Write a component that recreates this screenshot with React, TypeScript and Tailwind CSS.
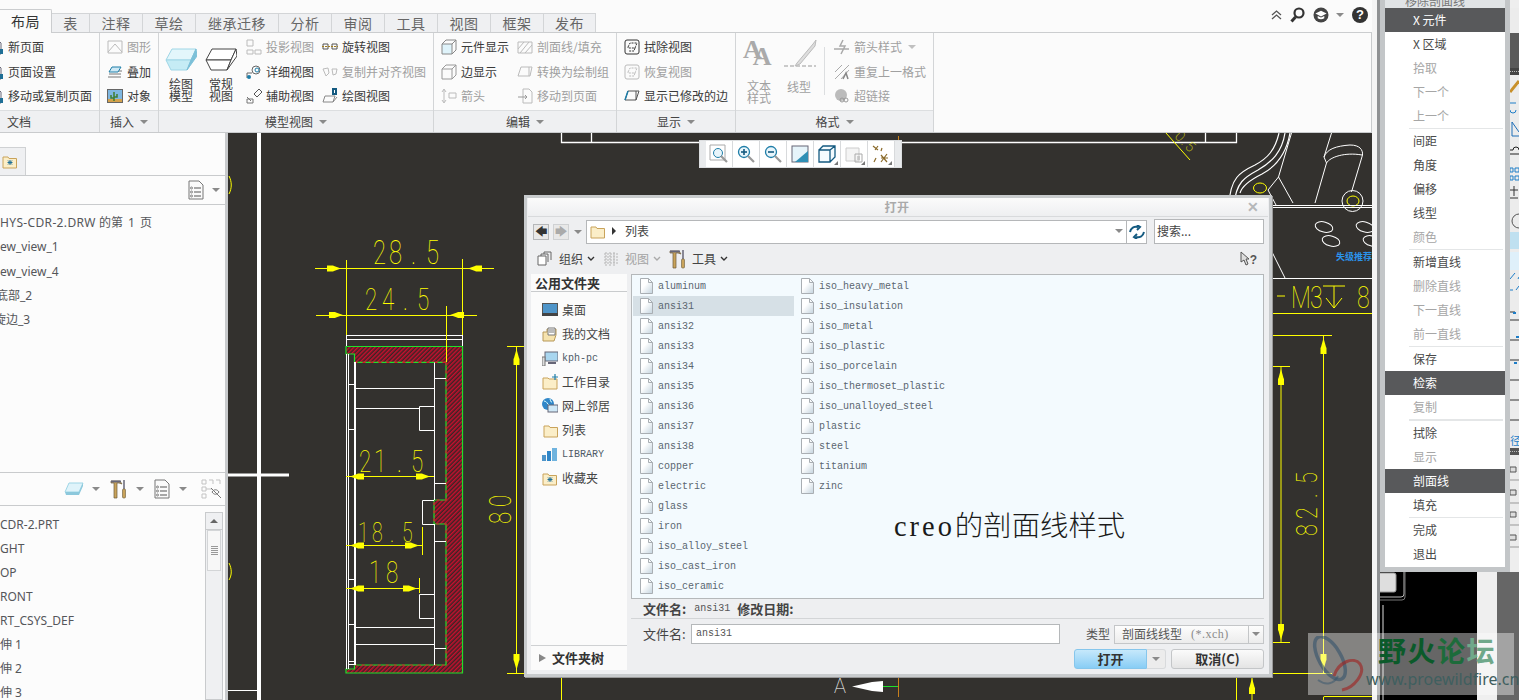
import type { ReactNode } from 'react';

const DOWN = 'inline-block w-0 h-0 border-x-[4px] border-x-transparent border-t-[4px] border-t-[#8a8a8a]';

function S({ w = 16, h = 16, children }: { w?: number; h?: number; children: ReactNode }) {
  return (
    <svg width={w} height={h} viewBox={`0 0 ${w} ${h}`} fill="none" className="shrink-0 block">
      {children}
    </svg>
  );
}

const Page = () => (
  <S>
    <path d="M4 1h6l3 3v11H4z" fill="#fff" stroke="#667" />
    <path d="M6 10h9v5H6z" fill="#1f6f96" />
  </S>
);
const Graph = () => (
  <S>
    <path d="M1 2h14v12H1z" stroke="#bbb" />
    <path d="M1 13l7-8 7 8" stroke="#bbb" />
  </S>
);
const Overlay = () => (
  <S>
    <path d="M1 13h13M2 10h12M3 7h12" stroke="#777" />
    <path d="M5 3h9l-3 5H2z" fill="#cfe9f5" stroke="#1f7ea8" />
  </S>
);
const Picture = () => (
  <S>
    <rect x="0.5" y="1.5" width="15" height="13" fill="#7fb7e0" stroke="#666" />
    <path d="M1 11h14v3H1z" fill="#d4a24c" />
    <path d="M7 4v9M4 7v3h3M10 6v3H7" stroke="#3f7d2e" strokeWidth="1.5" />
  </S>
);
const BigBlock = ({ blue }: { blue?: boolean }) => (
  <S w={32} h={26}>
    <path d="M7 2h24l-5 11H1z" fill={blue ? '#e3f6fb' : '#fff'} stroke={blue ? '#9fd6e6' : '#444'} />
    <path d="M1 13h25l-4 10H6z" fill={blue ? '#c5ecf5' : '#fff'} stroke={blue ? '#9fd6e6' : '#444'} />
    <path d="M31 2l1 7-10 14 4-10z" fill={blue ? '#7cc0d8' : '#fff'} stroke={blue ? '#7cc0d8' : '#444'} />
  </S>
);
const Projection = () => (
  <S>
    <path d="M1 1h6v6H1zM1 11h6v4H1zM9 11h6v4H9z" stroke="#bbb" />
  </S>
);
const Detail = () => (
  <S>
    <circle cx="10" cy="6" r="4" stroke="#666" />
    <path d="M1 9h5M1 9v5" stroke="#666" />
    <circle cx="3" cy="13" r="2" fill="#1f7ea8" />
    <circle cx="11" cy="6" r="2" stroke="#1f7ea8" />
  </S>
);
const Auxiliary = () => (
  <S>
    <path d="M8 6l5-5 3 3-5 5z" stroke="#555" />
    <path d="M1 9l4 4M1 11h6v4H1z" stroke="#777" />
  </S>
);
const Rotate = () => (
  <S>
    <path d="M1 5h5v5H1zM10 5h5v5h-5z" stroke="#555" />
    <path d="M0 7.5h16" stroke="#a07d20" strokeDasharray="2 1" />
  </S>
);
const CopyAlign = () => (
  <S>
    <path d="M1 5l5-1 1 5-3 3zM10 5h5l-1 5-3 1z" stroke="#bbb" />
  </S>
);
const DrawingView = () => (
  <S>
    <path d="M3 8h10l-2 6H1zM11 14l4-5" stroke="#888" />
    <rect x="10" y="0" width="5" height="7" fill="#145a80" />
    <path d="M12.5 2v3" stroke="#fff" />
  </S>
);
const Cube = ({ c = '#999', fill }: { c?: string; fill?: string }) => (
  <S>
    <path d="M1 5h10v10H1z" fill={fill} stroke={c} />
    <path d="M1 5l4-4h10v10l-4 4M11 5l4-4" stroke={c} />
  </S>
);
const Arrows = () => (
  <S>
    <path d="M3 2v12M1 4l2-3 2 3M1 12l2 3 2-3" stroke="#bbb" />
    <path d="M8 5h7v5H8z" stroke="#bbb" />
  </S>
);
const Hatch = () => (
  <S>
    <path d="M1 3h14v11H1zM1 10l6-7M3 14l9-11M8 14l7-8" stroke="#bbb" />
  </S>
);
const Convert = () => (
  <S>
    <path d="M4 3h11l-2 9H1z" stroke="#bbb" />
    <path d="M12 3v9" stroke="#bbb" />
  </S>
);
const MoveTo = () => (
  <S>
    <path d="M6 1h6l3 3v11H6z" stroke="#bbb" />
    <path d="M1 9h9M8 7l2 2-2 2" stroke="#999" />
  </S>
);
const Erase = ({ c = '#333' }: { c?: string }) => (
  <S>
    <rect x="1" y="1" width="14" height="14" rx="2" stroke={c} />
    <path d="M4 8l2-4h7l-2 5H4zM11 9l-1 3H5" stroke={c} strokeDasharray="2 1" />
  </S>
);
const Modified = () => (
  <S>
    <path d="M4 3h11l-3 9H1z" stroke="#555" />
    <path d="M1 12l3-9" stroke="#1f7ea8" strokeWidth="1.5" />
    <path d="M12 3v9" stroke="#555" />
  </S>
);
const ArrowStyle = () => (
  <S>
    <path d="M0 10h15M9 1L6 7h5l-4 8" stroke="#aaa" strokeWidth="1.5" />
  </S>
);
const Repeat = () => (
  <S>
    <path d="M1 8l7-7M1 15L15 1M7 15l8-9" stroke="#aaa" />
    <path d="M9 15l3-6 2 6" stroke="#888" strokeWidth="1.5" />
  </S>
);
const Link = () => (
  <S>
    <circle cx="7" cy="7" r="6" fill="#bbb" />
    <circle cx="8" cy="12" r="2" stroke="#999" />
    <circle cx="12" cy="12" r="2" stroke="#999" />
  </S>
);

function Folder({ star, w = 16 }: { star?: boolean; w?: number }) {
  return (
    <S w={w} h={15}>
      <path d="M1 3h5l1 1.5h7.5V14H1z" fill="#fbeec8" stroke="#c9a35a" />
      {star && <path d="M8 6v5M5.5 8.5h5M6 6.5l4 4M10 6.5l-4 4" stroke="#1f6f96" />}
    </S>
  );
}

const Tools = () => (
  <S w={17} h={20}>
    <path d="M1 2h9l2 3-3-1H7v15H4V4H1z" fill="#c9a35a" stroke="#6a5a3a" strokeWidth=".7" />
    <path d="M1 1.5h10v2H1z" fill="#667" />
    <path d="M14 1v9" stroke="#667" strokeWidth="1.5" />
    <rect x="12.5" y="10" width="3" height="9" rx="1" fill="#c9a35a" stroke="#6a5a3a" strokeWidth=".6" />
  </S>
);

const Sheet = () => (
  <S w={16} h={20}>
    <path d="M1 1h10l4 4v14H1z" fill="#fafafa" stroke="#777" />
    <path d="M6 8h7M6 12h7M6 16h7" stroke="#555" />
    <circle cx="3.5" cy="8" r="1" stroke="#555" strokeWidth=".7" />
    <circle cx="3.5" cy="12" r="1" stroke="#555" strokeWidth=".7" />
    <circle cx="3.5" cy="16" r="1" stroke="#555" strokeWidth=".7" />
  </S>
);

function Item({ icon, label, off }: { icon: ReactNode; label: string; off?: boolean }) {
  return (
    <div className={`flex items-center h-[24.5px] whitespace-nowrap ${off ? 'text-[#a0a0a0]' : 'text-[#3a3a3a]'}`}>
      <span className="w-4 h-4 mr-1 shrink-0">{icon}</span>
      {label}
    </div>
  );
}

function Big({ icon, lines, off }: { icon: ReactNode; lines: string[]; off?: boolean }) {
  return (
    <div className={`w-[40px] flex flex-col items-center ${off ? 'text-[#a0a0a0]' : 'text-[#3a3a3a]'}`}>
      <div className="h-[40px] pt-[12px]">{icon}</div>
      <div className="mt-[3px] leading-[12px] text-center">
        {lines.map((l) => (
          <div key={l}>{l}</div>
        ))}
      </div>
    </div>
  );
}

function Group({ width, label, more, start, children }: { width: string; label: string; more?: boolean; start?: boolean; children: ReactNode }) {
  return (
    <div className={`${width} shrink-0 flex flex-col border-r border-[#d3d5d7]`}>
      <div className="h-[77px] flex overflow-hidden pt-[2px]">{children}</div>
      <div className={`h-[22px] bg-[#eff0f2] flex items-center gap-[6px] text-[#444] border-t border-[#dcdee0] ${start ? 'pl-[7px]' : 'justify-center'}`}>
        {label}
        {more && <span className={DOWN} />}
      </div>
    </div>
  );
}

const TABS = [
  ['表', 'w-[38px]'],
  ['注释', 'w-[53px]'],
  ['草绘', 'w-[53px]'],
  ['继承迁移', 'w-[83px]'],
  ['分析', 'w-[53px]'],
  ['审阅', 'w-[53px]'],
  ['工具', 'w-[53px]'],
  ['视图', 'w-[53px]'],
  ['框架', 'w-[53px]'],
  ['发布', 'w-[52px]'],
];

function Ribbon() {
  return (
    <div className="h-[133px] bg-[#fbfbfb] text-[12px] border-b border-[#c9cbcd] shrink-0">
      <div className="h-[33px] flex items-end relative border-b border-[#cbcdcf]">
        <div className="w-[52px] h-[24px] -mb-px bg-[#fbfbfb] border-t border-r border-[#cbcdcf] rounded-tr-[2px] flex items-center justify-center text-[14px] tracking-[0.5px] text-[#333]">
          布局
        </div>
        {TABS.map(([t, w]) => (
          <div key={t} className={`${w} h-[19px] bg-[#eff0f2] border-t border-r border-[#d3d5d7] flex items-center justify-center text-[14px] tracking-[0.5px] text-[#666]`}>
            {t}
          </div>
        ))}
        <div className="absolute right-[4px] top-[7px] flex items-center">
          <svg width="11" height="10" viewBox="0 0 11 10" fill="none">
            <path d="M1 5l4.5-4 4.5 4M1 9l4.5-4 4.5 4" stroke="#555" strokeWidth="1.3" />
          </svg>
          <svg width="15" height="16" viewBox="0 0 15 16" fill="none" className="ml-[8px]">
            <circle cx="9" cy="6" r="4.5" stroke="#333" strokeWidth="2.2" />
            <path d="M5.5 10l-4 4.5" stroke="#333" strokeWidth="3" />
          </svg>
          <svg width="16" height="16" viewBox="0 0 17 17" className="ml-[8px]">
            <circle cx="8.5" cy="8.5" r="8" fill="#444" />
            <path d="M2.5 7l6-3 6 3-6 3z" fill="#fff" />
            <path d="M5 9.5v2.5c2 1.3 5 1.3 7 0V9.5l-3.5 1.7z" fill="#fff" />
          </svg>
          <span className={`${DOWN} ml-[7px] mr-[8px]`} />
          <div className="w-[16px] h-[16px] rounded-full bg-[#333] text-white font-bold text-[13px] leading-[16px] text-center font-['Liberation_Sans']">?</div>
        </div>
      </div>
      <div className="flex h-[99px] w-[1372px] border-r border-[#c9cbcd]">
        <Group width="w-[100px]" label="文档" start>
          <div className="-ml-[12px]">
            <Item icon={<Page />} label="新页面" />
            <Item icon={<Page />} label="页面设置" />
            <Item icon={<Page />} label="移动或复制页面" />
          </div>
        </Group>
        <Group width="w-[59px]" label="插入" more>
          <div className="pl-[7px]">
            <Item icon={<Graph />} label="图形" off />
            <Item icon={<Overlay />} label="叠加" />
            <Item icon={<Picture />} label="对象" />
          </div>
        </Group>
        <Group width="w-[275px]" label="模型视图" more>
          <div className="flex pl-[2px]">
            <Big icon={<BigBlock blue />} lines={['绘图', '模型']} />
            <Big icon={<BigBlock />} lines={['常规', '视图']} />
            <div className="ml-[5px] w-[76px]">
              <Item icon={<Projection />} label="投影视图" off />
              <Item icon={<Detail />} label="详细视图" />
              <Item icon={<Auxiliary />} label="辅助视图" />
            </div>
            <div>
              <Item icon={<Rotate />} label="旋转视图" />
              <Item icon={<CopyAlign />} label="复制并对齐视图" off />
              <Item icon={<DrawingView />} label="绘图视图" />
            </div>
          </div>
        </Group>
        <Group width="w-[183px]" label="编辑" more>
          <div className="flex pl-[7px]">
            <div className="w-[76px]">
              <Item icon={<Cube c="#888" fill="#dff3fa" />} label="元件显示" />
              <Item icon={<Cube />} label="边显示" />
              <Item icon={<Arrows />} label="箭头" off />
            </div>
            <div>
              <Item icon={<Hatch />} label="剖面线/填充" off />
              <Item icon={<Convert />} label="转换为绘制组" off />
              <Item icon={<MoveTo />} label="移动到页面" off />
            </div>
          </div>
        </Group>
        <Group width="w-[119px]" label="显示" more>
          <div className="pl-[7px]">
            <Item icon={<Erase />} label="拭除视图" />
            <Item icon={<Erase c="#bbb" />} label="恢复视图" off />
            <Item icon={<Modified />} label="显示已修改的边" />
          </div>
        </Group>
        <Group width="w-[198px]" label="格式" more>
          <div className="flex pl-[7px]">
            <div className="w-[36px] text-[#a0a0a0]">
              <div className="relative h-[34px] mt-[3px] font-['Liberation_Serif'] font-bold text-[26px] leading-[26px] text-[#aaa] flex">
                <span className="-mt-[1px]">A</span>
                <span className="-ml-[9px] mt-[6px]">A</span>
              </div>
              <div className="mt-[8px] ml-[4px] leading-[12px]">
                <div>文本</div>
                <div>样式</div>
              </div>
            </div>
            <div className="w-[44px] pl-[4px] text-[#a0a0a0]">
              <svg width="34" height="34" viewBox="0 0 34 34" fill="none" className="block mt-[3px]">
                <path d="M14 25L30 6l3-4-1 6-15 18-5 2z" fill="#ddd" stroke="#bbb" />
                <path d="M1 28h32" stroke="#bbb" strokeWidth="1.5" strokeDasharray="4 2" />
              </svg>
              <div className="mt-[6px] ml-[4px]">线型</div>
            </div>
            <div className="w-px h-[48px] bg-[#dcdee0] mt-[12px] ml-[1px] mr-[9px]" />
            <div>
              <div className="flex items-center">
                <Item icon={<ArrowStyle />} label="箭头样式" off />
                <span className={`${DOWN} ml-[6px] border-t-[#c0c0c0]`} />
              </div>
              <Item icon={<Repeat />} label="重复上一格式" off />
              <Item icon={<Link />} label="超链接" off />
            </div>
          </div>
        </Group>
      </div>
    </div>
  );
}

function LeftPanel() {
  return (
    <div className="w-[228px] shrink-0 flex flex-col bg-[#fcfcfc] border-r-[3px] border-[#c8cacc] text-[12px] text-[#55565a] font-['Noto_Sans','Noto_Sans_CJK_SC',sans-serif] overflow-hidden">
      <div className="h-[340px] border-b border-[#c9cbcd] shrink-0">
        <div className="pt-[14px] border-b border-[#c9cbcd]">
          <div className="w-[26px] h-[28px] bg-[#eff0f2] border-t border-r border-[#cfd1d3] flex items-center justify-end pr-[6px]">
            <Folder star w={17} />
          </div>
        </div>
        <div className="h-[29px] flex items-center justify-end gap-[8px] pr-[5px] border-b border-[#c9cbcd]">
          <Sheet />
          <span className={DOWN} />
        </div>
        <div className="pt-[6px] whitespace-nowrap">
          <div className="h-[24.25px] leading-[24px]">
            <span className="tracking-[0.35px]">HYS-CDR-2.DRW</span> <span className="[word-spacing:2px]">的第 1 页</span>
          </div>
          {['ew_view_1', 'ew_view_4'].map((t) => (
            <div key={t} className="h-[24.25px] leading-[24px]">{t}</div>
          ))}
          <div className="h-[24.25px] leading-[24px] -ml-[4px]">底部_2</div>
          <div className="h-[24.25px] leading-[24px] -ml-[6px]">旋边_3</div>
        </div>
      </div>
      <div className="h-[33px] shrink-0 flex items-center justify-end pr-[4px] border-b border-[#c9cbcd]">
        <svg width="20" height="16" viewBox="0 0 20 16" fill="none">
          <path d="M5 2h14l-4 9H1z" fill="#dff3fa" stroke="#9fd6e6" />
          <path d="M1 11h14v3H2zM15 11l4-9v3l-4 9z" fill="#8cc8dc" />
        </svg>
        <span className={`${DOWN} ml-[8px] mr-[10px]`} />
        <Tools />
        <span className={`${DOWN} ml-[9px] mr-[10px]`} />
        <Sheet />
        <span className={`${DOWN} ml-[9px] mr-[14px]`} />
        <svg width="20" height="20" viewBox="0 0 20 20" fill="none">
          <path d="M1 1h4v4H1zM1 8h4v4H1zM1 15h4v4H1zM8 1h4v4M5 10h6M15 1h4v4" stroke="#c3c3c3" />
          <path d="M11 13c2-3 5-3 7 0-2 3-5 3-7 0zM10 9l10 10" stroke="#777" />
        </svg>
      </div>
      <div className="flex-1 flex min-h-0">
        <div className="flex-1 pt-[6px] whitespace-nowrap overflow-hidden">
          {['CDR-2.PRT', 'GHT', 'OP', 'RONT', 'RT_CSYS_DEF', '伸 1', '伸 2', '伸 3'].map((t) => (
            <div key={t} className="h-[24px] leading-[26px]">{t}</div>
          ))}
        </div>
        <div className="w-[18px] mt-[6px] mr-[2px] bg-[#eff0f2] border border-[#c9cbcd] flex flex-col items-center">
          <div className="h-[17px] w-full flex items-center justify-center border-b border-[#c9cbcd]">
            <span className="w-0 h-0 border-x-[4px] border-x-transparent border-b-[4px] border-b-[#666]" />
          </div>
          <div className="w-[14px] h-[41px] bg-[#f7f7f7] border border-[#d3d5d7] flex flex-col items-center justify-center gap-[1px]">
            <span className="w-[7px] h-px bg-[#999]" />
            <span className="w-[7px] h-px bg-[#999]" />
            <span className="w-[7px] h-px bg-[#999]" />
            <span className="w-[7px] h-px bg-[#999]" />
            <span className="w-[7px] h-px bg-[#999]" />
          </div>
        </div>
      </div>
    </div>
  );
}

const Y = '#ffff00';
const W = '#ffffff';

function ArrowH({ x, y, d }: { x: number; y: number; d: 1 | -1 }) {
  return (
    <polygon
      points={`${x},${y} ${x - d * 7},${y - 2.5} ${x - d * 8},${y - 3} ${x - d * 14},${y - 3} ${x - d * 14},${y + 3} ${x - d * 8},${y + 3} ${x - d * 7},${y + 2.5}`}
      fill={Y}
    />
  );
}
function ArrowV({ x, y, d }: { x: number; y: number; d: 1 | -1 }) {
  return (
    <polygon
      points={`${x},${y} ${x - 2.5},${y - d * 9} ${x - 3},${y - d * 10} ${x - 3},${y - d * 16} ${x + 3},${y - d * 16} ${x + 3},${y - d * 10} ${x + 2.5},${y - d * 9}`}
      fill={Y}
    />
  );
}
// digits of the drawing: narrow stroke figures, placed one by one
function Dim({ x, y, xs, size, t, rot }: { x: number; y: number; xs: number[]; size: number; t: string; rot?: boolean }) {
  const k = 0.72;
  return (
    <text
      x={xs.map((v) => (v / k).toFixed(1)).join(' ')}
      y={0}
      fontSize={size}
      fontFamily="Roboto"
      fontWeight={100}
      fill={Y}
      transform={`translate(${x} ${y}) ${rot ? 'rotate(-90)' : ''} scale(${k} 1)`}
    >
      {t}
    </text>
  );
}

function Drawing() {
  const outer = 'M346,346.5 H462.5 V673 H346 V669 H354.5 V665 H446 V524 H434 V500 H446 V362.3 H354.5 V354 H346 Z';
  return (
    <svg width="1144" height="567" viewBox="228 133 1144 567" fill="none" className="block">
      <defs>
        <pattern id="hatch" width="3" height="3" patternUnits="userSpaceOnUse" patternTransform="rotate(45)">
          <rect width="3" height="3" fill="#3a2426" />
          <rect width="1.5" height="3" fill="#c8102e" />
        </pattern>
      </defs>
      {/* frame lines */}
      <path d="M259,133 V700" stroke={W} strokeWidth="4" />
      <path d="M228,475 H289" stroke={W} strokeWidth="3" />
      <path d="M228,690.5 H257" stroke={W} />
      <path d="M229,176 C232,182 232,188 229,194 M229,563 C232,569 232,575 229,580" stroke={Y} />
      <path d="M561.5,133 V142.5 H1236.5 V133 M591.5,133 V142 M1205.5,133 V142" stroke={W} strokeWidth="1.3" />
      <path d="M898.5,136 V142" stroke="#c8801c" />

      {/* section view */}
      <path d={outer} fill="url(#hatch)" />
      <path d={outer} stroke="#1fe02a" strokeWidth="1.2" />
      <path d="M446,362.3 V500 H434 V524 H446 V665 H354.5 M354.5,362.3 H446" stroke="#e0102a" strokeWidth="1.2" strokeDasharray="3 5" />
      <path d="M346.5,335.5 H463 M346.5,339.5 H463 M346.5,335 V346 M462.5,335 V346" stroke={W} />
      <path d="M346.5,354 V669 M348.5,354 V669" stroke={W} />
      <path d="M355,362 V665" stroke={W} strokeWidth="2" />
      <path d="M348,384.5 H355 M348,429.5 H355 M348,579.5 H355 M348,624.5 H355 M348,661.5 H355 M348,664.5 H355" stroke={W} />
      <path d="M434.5,362.5 V500 M434.5,524 V665" stroke={W} />
      <path d="M355,388.5 H434 M355,408.5 H419 M419.5,406.5 H434 M419.5,406.5 V430.5 H434 M434,378.5 H446 M434,483.5 H446 M422.5,500.5 H434 M422.5,500.5 V524.5 H434 M434,541.5 H446 M419.5,594.5 H434 M419.5,594.5 V618.5 H434 M355,627.5 H434 M355,644.5 H434 M434,648.5 H446" stroke={W} />

      {/* dimensions, section view */}
      <Dim x={373} y={264} xs={[0, 16, 38, 53]} size={33} t="28.5" />
      <path d="M315,268.5 H494 M346.5,260 V335 M462.5,259 V335" stroke={Y} />
      <ArrowH x={341} y={268.5} d={1} />
      <ArrowH x={468} y={268.5} d={-1} />
      <Dim x={365} y={310} xs={[0, 17, 38, 52]} size={31} t="24.5" />
      <path d="M316,315.5 H477 M446.5,306 V362" stroke={Y} />
      <ArrowH x={343} y={315} d={1} />
      <ArrowH x={450} y={315} d={-1} />
      <Dim x={359} y={472} xs={[0, 15, 38, 52]} size={31} t="21.5" />
      <path d="M346,476.5 H434" stroke={Y} />
      <ArrowH x={350} y={476.5} d={-1} />
      <ArrowH x={430} y={476.5} d={1} />
      <Dim x={358} y={542} xs={[0, 14, 32, 44]} size={27} t="18.5" />
      <path d="M346,545.5 H422 M422.5,527 V555" stroke={Y} />
      <ArrowH x={350} y={545.5} d={-1} />
      <ArrowH x={419} y={545.5} d={1} />
      <Dim x={369} y={583} xs={[0, 17]} size={31} t="18" />
      <path d="M346,588.5 H419 M419.5,578 V593" stroke={Y} />
      <ArrowH x={350} y={588.5} d={-1} />
      <ArrowH x={417} y={588.5} d={1} />
      <Dim x={511} y={524} xs={[0, 17]} size={31} t="80" rot />
      <path d="M516.5,347 V673 M507,346.5 H524 M507,673.5 H524" stroke={Y} />
      <ArrowV x={516.5} y={349} d={-1} />
      <ArrowV x={516.5} y={670} d={1} />

      {/* right side of the sheet */}
      <path d="M1279,133 C1275,150 1268,158 1255,165 C1240,172 1230,178 1229,205 M1285,133 C1282,152 1272,162 1258,170 C1245,177 1236,182 1234,205 M1290,133 C1287,150 1279,165 1262,174 C1250,180 1242,186 1240,193" stroke={W} strokeWidth="1.2" />
      <path d="M1291.5,133 L1278.5,177 L1293,203 M1278.5,177 L1268,190 L1276,205 M1331.5,133 L1324,157 C1327,149 1336,146 1350,145 C1360,145 1363,150 1362.5,155 L1351.5,192 M1326.5,163 L1315,203 M1324,157 L1326.5,163 C1330,157 1345,152 1362,155" stroke={W} />
      <circle cx="1352.5" cy="201" r="10.5" stroke={W} />
      <ellipse cx="1353" cy="201" rx="6" ry="5" stroke={Y} />
      <ellipse cx="1260" cy="188" rx="6.5" ry="5" stroke={Y} />
      <path d="M1272,205.5 H1372 M1272,207.5 H1372 M1272,278.5 H1372 M1272,252 L1285,278" stroke={W} />
      <ellipse cx="1324" cy="227" rx="9" ry="5" transform="rotate(15 1324 227)" stroke={W} />
      <ellipse cx="1331" cy="241" rx="9" ry="5" transform="rotate(15 1331 241)" stroke={W} />
      <ellipse cx="1365" cy="227" rx="9" ry="5" transform="rotate(15 1365 227)" stroke={W} />
      <ellipse cx="1372" cy="241" rx="9" ry="5" transform="rotate(15 1372 241)" stroke={W} />
      <text x="1336" y="260" fontSize="9" fontWeight="700" fontFamily="Noto Sans CJK SC" fill="#2b93ea">失级推荐</text>
      <path d="M1166,133 L1190,160" stroke={Y} />
      <text x="1174" y="137" fontSize="14" fontFamily="Roboto" fontWeight={100} fill={Y} letterSpacing="2" transform="rotate(45 1174 137)">0.5</text>

      <path d="M1277,296 H1285" stroke={Y} />
      <Dim x={1291} y={308} xs={[0, 19]} size={32} t="M3" />
      <path d="M1323,286 H1345 M1334,286 V308 M1326,298 L1334,308 L1342,298" stroke={Y} />
      <Dim x={1357} y={308} xs={[0]} size={32} t="8" />
      <path d="M1272,313.5 H1372" stroke={Y} />
      <path d="M1272,335.5 H1332 M1323.5,336 V673 M1272,673.5 H1332 M1272,366.5 H1290 M1281,367 V642 M1272,642.5 H1290" stroke={Y} />
      <ArrowV x={1323.5} y={338} d={-1} />
      <ArrowV x={1323.5} y={670} d={1} />
      <ArrowV x={1281} y={369} d={-1} />
      <ArrowV x={1281} y={640} d={1} />
      <Dim x={1317} y={536} xs={[0, 17, 38, 52]} size={30} t="82.5" rot />

      {/* below the dialog */}
      <path d="M561.5,677 V700 M1236.5,677 V700 M1252,677 V700" stroke={Y} />
      <ArrowV x={1252} y={678} d={-1} />
      <path d="M1323.5,700 V697 Q1323.5,696.5 1325,696.5 H1372" stroke={Y} />
      <text x="834" y="693" fontSize="20" fontFamily="Roboto" fontWeight={100} fill={W}>A</text>
      <polygon points="852,686.5 872,682 883,681 883,692 872,691" fill={W} />
      <path d="M883,686.5 H898" stroke="#1fe02a" />
      <path d="M898.5,677 V697" stroke="#c8801c" />
    </svg>
  );
}

function FloatBar() {
  const lens = (sign?: '+' | '-') => (
    <svg width="20" height="20" viewBox="0 0 20 20" fill="none">
      <circle cx="8" cy="8" r="5.5" fill="#e8f5fb" stroke="#1f7ea8" strokeWidth="1.3" />
      {sign && <path d="M5 8h6" stroke="#145a80" strokeWidth="1.6" />}
      {sign === '+' && <path d="M8 5v6" stroke="#145a80" strokeWidth="1.6" />}
      <path d="M12 12l6 6" stroke="#999" strokeWidth="2.2" />
    </svg>
  );
  return (
    <div className="absolute left-[471px] top-[7px] h-[28px] w-[203px] bg-[#e9ebed] px-[6px] flex border border-[#dcdee0]">
      {[
        <div key="0" className="relative">
          <svg width="20" height="20" viewBox="0 0 20 20" fill="none">
            <path d="M1 1h15v15H1z" stroke="#aaa" />
            <circle cx="9" cy="9" r="4.5" fill="#e8f5fb" stroke="#1f7ea8" />
            <path d="M12 12l6 6" stroke="#999" strokeWidth="2.2" />
          </svg>
        </div>,
        <div key="1">{lens('+')}</div>,
        <div key="2">{lens('-')}</div>,
        <svg key="3" width="18" height="18" viewBox="0 0 18 18" fill="none">
          <rect x="1" y="1" width="16" height="16" fill="#e6f4fa" stroke="#667" />
          <path d="M17 6L4 17h13z" fill="#2f8fb5" />
        </svg>,
        <svg key="4" width="18" height="18" viewBox="0 0 18 18" fill="none">
          <path d="M1 5h11v12H1zM1 5l4-4h12v11l-5 5M12 5l5-4" fill="#f4fbfe" stroke="#145a80" strokeWidth="1.3" />
        </svg>,
        <svg key="5" width="18" height="18" viewBox="0 0 18 18" fill="none">
          <path d="M1 3h13v13H1z" fill="#f4f4f4" stroke="#ccc" />
          <path d="M10 9h7v8h-7zM12 12h3M12 14h3" stroke="#aaa" />
        </svg>,
        <svg key="6" width="18" height="18" viewBox="0 0 18 18" fill="none">
          <path d="M1 1l5 4M3 5l3-4" stroke="#8a6a2a" strokeWidth="1.2" />
          <path d="M10 3l-1 3M2 17l2-4M9 10l6 7M15 9l-6 8M9 13h7" stroke="#8a6a2a" strokeWidth="1.2" />
        </svg>,
      ].map((ic, i) => (
        <div key={i} className="relative w-[27.5px] h-full bg-white border-r border-[#d8dadc] flex items-center justify-center">
          {ic}
          {i > 3 && <span className="absolute right-[2px] bottom-[2px] w-0 h-0 border-l-[4px] border-l-transparent border-b-[4px] border-b-[#777]" />}
        </div>
      ))}
    </div>
  );
}

const FILES_A = ['aluminum', 'ansi31', 'ansi32', 'ansi33', 'ansi34', 'ansi35', 'ansi36', 'ansi37', 'ansi38', 'copper', 'electric', 'glass', 'iron', 'iso_alloy_steel', 'iso_cast_iron', 'iso_ceramic'];
const FILES_B = ['iso_heavy_metal', 'iso_insulation', 'iso_metal', 'iso_plastic', 'iso_porcelain', 'iso_thermoset_plastic', 'iso_unalloyed_steel', 'plastic', 'steel', 'titanium', 'zinc'];

function FileRow({ name, active }: { name: string; active?: boolean }) {
  return (
    <div className={`h-[20px] pl-[7px] flex items-center gap-[5px] ${active ? 'bg-[#d6e0e6]' : ''}`}>
      <svg width="13" height="16" viewBox="0 0 13 16" fill="none" className="shrink-0">
        <path d="M.5.5h8l4 4v11H.5z" fill="url(#filegrad)" stroke="#a9aeb3" />
        <path d="M8.5.5v4h4" stroke="#a9aeb3" />
      </svg>
      <span>{name}</span>
    </div>
  );
}

function SideItem({ icon, label, mono }: { icon: ReactNode; label: string; mono?: boolean }) {
  return (
    <div className="h-[24px] flex items-center pl-[11px]">
      <span className="w-[16px] h-[16px] mr-[4px] flex items-center justify-center">{icon}</span>
      <span className={mono ? "font-['Liberation_Mono'] text-[10px] text-[#4d5a66]" : ''}>{label}</span>
    </div>
  );
}

function Dialog() {
  return (
    <div className="absolute left-[296px] top-[62px] w-[748px] h-[482px] border-[3px] border-[#c8cbcd] bg-[#eeeff1] text-[12px] text-[#444] font-['Noto_Sans_CJK_SC','Noto_Sans',sans-serif] shadow-[1px_1px_0_#999]">
      <svg width="0" height="0" className="absolute">
        <defs>
          <linearGradient id="filegrad" x1="0" y1="0" x2="1" y2="1">
            <stop offset="0.4" stopColor="#ffffff" />
            <stop offset="1" stopColor="#c3d3de" />
          </linearGradient>
        </defs>
      </svg>
      <div className="h-[19px] relative bg-gradient-to-b from-[#fbfbfb] to-[#eeeff1] border-b border-[#d8dadc] mx-[1px] flex items-center justify-center font-bold text-[#aaaaaa] tracking-[0.5px] pr-[2px]">
        打开
        <span className="absolute right-[9px] top-[2px] text-[14px] leading-[14px] text-[#b5b7b9] font-bold font-['Liberation_Sans']">✕</span>
      </div>
      {/* address row */}
      <div className="h-[25px] mt-[2px] pl-[6px] pr-[5px] flex items-center">
        <div className="w-[16px] h-[16px] bg-[#e8e8e8] border border-[#b5b7b9] flex items-center justify-center text-[12px] leading-none text-[#333] font-['DejaVu_Sans']">🡄</div>
        <div className="w-[16px] h-[16px] ml-[4px] bg-[#e8e8e8] border border-[#cfd1d3] flex items-center justify-center text-[12px] leading-none text-[#aaa] font-['DejaVu_Sans']">🡆</div>
        <span className={`${DOWN} ml-[5px] mr-[4px]`} />
        <div className="w-[541px] h-[24px] bg-white border border-[#b5b7b9] flex items-center pl-[3px] pb-[1px]">
          <Folder w={15} />
          <span className="ml-[7px] mr-[9px] w-0 h-0 border-y-[4px] border-y-transparent border-l-[4px] border-l-[#333]" />
          列表
          <span className={`${DOWN} ml-auto mr-[3px]`} />
        </div>
        <div className="w-[20px] h-[24px] bg-white border-y border-r border-[#b5b7b9] flex items-center justify-center">
          <svg width="16" height="14" viewBox="0 0 16 14" fill="none">
            <path d="M1 7c1-4 4-6 8-5M8 0l3 2-3 3M15 7c-1 4-4 6-8 5M8 14l-3-2 3-3" stroke="#145a80" strokeWidth="2" />
          </svg>
        </div>
        <div className="w-[110px] h-[25px] ml-[7px] bg-white border border-[#b5b7b9] flex items-center pl-[2px] pb-[1px]">搜索...</div>
      </div>
      {/* tools row */}
      <div className="h-[27px] mt-[2px] pl-[10px] pb-[2px] flex items-center relative">
        <svg width="15" height="15" viewBox="0 0 15 15" fill="none">
          <path d="M1 5h8v9H1z" fill="#fff" stroke="#666" />
          <path d="M4 5V3h7v8M7 3V1h7v8" stroke="#666" />
        </svg>
        <span className="ml-[7px]">组织</span>
        <svg width="8" height="6" viewBox="0 0 8 6" fill="none" className="ml-[4px]"><path d="M1 1l3 3 3-3" stroke="#333" strokeWidth="1.4" /></svg>
        <svg width="14" height="14" viewBox="0 0 14 14" fill="none" className="ml-[9px]">
          <path d="M0 2h14M0 5h14M0 8h14M0 11h14M2 0v14M6 0v14M10 0v14" stroke="#b5b5b5" strokeDasharray="2 1" />
        </svg>
        <span className="ml-[7px] text-[#a3a3a3]">视图</span>
        <svg width="8" height="6" viewBox="0 0 8 6" fill="none" className="ml-[4px]"><path d="M1 1l3 3 3-3" stroke="#aaa" strokeWidth="1.4" /></svg>
        <span className="ml-[8px]"><Tools /></span>
        <span className="ml-[6px]">工具</span>
        <svg width="8" height="6" viewBox="0 0 8 6" fill="none" className="ml-[4px]"><path d="M1 1l3 3 3-3" stroke="#333" strokeWidth="1.4" /></svg>
        <div className="absolute right-[12px] top-[5px] flex items-end">
          <svg width="10" height="15" viewBox="0 0 10 15" fill="none"><path d="M1 1v10l3-2 2 5 2-1-2-5h3z" fill="#ddd" stroke="#555" /></svg>
          <span className="font-bold text-[12px] leading-[12px] font-['Liberation_Sans'] text-[#555]">?</span>
        </div>
      </div>
      {/* body */}
      <div className="flex pl-[4px] mt-[1px] h-[396px]">
        <div className="w-[96px] bg-[#fbfbfb] flex flex-col">
          <div className="h-[18px] mx-[0px] border-b border-[#c9cbcd] font-bold text-[13px] leading-[18px] pl-[4px] text-[#333]">公用文件夹</div>
          <div className="pt-[6px] flex-1">
            <SideItem label="桌面" icon={<svg width="16" height="14" viewBox="0 0 16 14"><rect x=".5" y=".5" width="15" height="10" fill="#4f95c9" stroke="#555" /><rect x="0" y="10" width="16" height="3" fill="#444" /></svg>} />
            <SideItem label="我的文档" icon={<svg width="16" height="15" viewBox="0 0 16 15" fill="none"><path d="M1 5h4V2h9v6l-2 6H1z" fill="#f6e3ae" stroke="#b79858" /><path d="M6 1h7v7H6zM7 3h5M7 5h5" fill="#fff" stroke="#777" /></svg>} />
            <SideItem label="kph-pc" mono icon={<svg width="16" height="15" viewBox="0 0 16 15" fill="none"><rect x="3" y="1" width="13" height="9" fill="#a9d6ef" stroke="#667" /><rect x="0" y="6" width="3" height="9" fill="#ddd" stroke="#777" /><path d="M6 12h8" stroke="#667" strokeWidth="2" /></svg>} />
            <SideItem label="工作目录" icon={<svg width="16" height="16" viewBox="0 0 16 16" fill="none"><path d="M1 4h5l1 1h8v10H1z" fill="#fbeec8" stroke="#c9a35a" /><path d="M13 0v6M10 3h6" stroke="#1f7ea8" strokeWidth="1.2" /></svg>} />
            <SideItem label="网上邻居" icon={<svg width="16" height="16" viewBox="0 0 16 16" fill="none"><circle cx="6" cy="6" r="6" fill="#2f86c8" /><path d="M2 3c3 0 3 3 5 4M8 1c1 2 0 3 2 3" stroke="#dff" /><rect x="6" y="7" width="10" height="7" fill="#cfe8f6" stroke="#667" /></svg>} />
            <SideItem label="列表" icon={<Folder w={15} />} />
            <SideItem label="LIBRARY" mono icon={<svg width="16" height="14" viewBox="0 0 16 14"><path d="M0 8h4v6H0z" fill="#4f95c9" /><path d="M5 4h4v10H5z" fill="#2f86c8" /><path d="M10 1h5v13h-5z" fill="#6fb3de" /></svg>} />
            <SideItem label="收藏夹" icon={<Folder star w={16} />} />
          </div>
          <div className="h-[25px] border-t border-[#cfd1d3] flex items-center pl-[8px] font-bold text-[13px] text-[#333]">
            <span className="w-0 h-0 border-y-[4px] border-y-transparent border-l-[7px] border-l-[#888] mr-[6px]" />
            文件夹树
          </div>
        </div>
        <div className="w-[633px] ml-[4px] flex flex-col">
          <div className="relative h-[325px] bg-[#f3fafe] border border-[#b5b8ba] flex pt-px pl-px font-['Liberation_Mono','Noto_Sans_CJK_SC',monospace] text-[10px] text-[#5a6670]">
            <div className="w-[161px]">
              {FILES_A.map((f) => (
                <FileRow key={f} name={f} active={f === 'ansi31'} />
              ))}
            </div>
            <div className="w-[200px]">
              {FILES_B.map((f) => (
                <FileRow key={f} name={f} />
              ))}
            </div>
            <div className="absolute left-[262px] top-[232px] text-[#1a1a1a] text-[28.4px] leading-[40px] font-light font-['Liberation_Serif','Noto_Sans_CJK_SC',serif] whitespace-nowrap">
              <span className="tracking-[3px]">creo</span>的剖面线样式
            </div>
          </div>
          <div className="h-[20px] border-b border-[#d3d5d7] flex items-center pl-[12px] font-bold text-[13px] text-[#444]">
            文件名:
            <span className="ml-[8px] mr-[7px] font-normal font-['Liberation_Mono'] text-[10px] text-[#555]">ansi31</span>
            修改日期:
          </div>
          <div className="h-[30px] flex items-center pl-[12px]">
            <span className="text-[13px] w-[48px]">文件名:</span>
            <div className="w-[369px] h-[20px] bg-white border border-[#b5b8ba] pl-[4px] leading-[18px] font-['Liberation_Mono'] text-[10px] text-[#555]">ansi31</div>
            <span className="ml-[26px] text-[#555]">类型</span>
            <div className="ml-[4px] w-[150px] h-[19px] bg-gradient-to-b from-[#fdfdfd] to-[#ececec] border border-[#c4c6c8] flex items-center pl-[7px] text-[#555]">
              剖面线线型
              <span className="ml-[9px] font-['Liberation_Serif'] text-[#8a8a8a] tracking-[0.5px]">(*.xch)</span>
              <div className="ml-auto w-[15px] h-full border-l border-[#c4c6c8] flex items-center justify-center">
                <span className={DOWN} />
              </div>
            </div>
          </div>
          <div className="flex justify-end">
            <div className="w-[73px] h-[20px] rounded-l-[3px] bg-gradient-to-b from-[#c6e8fb] to-[#88cdf5] border border-[#86c6ec] flex items-center justify-center font-bold text-[#333] text-[13px]">打开</div>
            <div className="w-[19px] h-[20px] rounded-r-[3px] bg-[#ececec] border-y border-r border-[#d8dadc] flex items-center justify-center">
              <span className={DOWN} />
            </div>
            <div className="w-[93px] h-[20px] ml-[5px] mr-0 rounded-[3px] bg-gradient-to-b from-[#fbfbfb] to-[#e4e4e4] border border-[#c4c6c8] flex items-center justify-center font-bold text-[#333] text-[13px]">
              取消(C)
            </div>
          </div>
        </div>
      </div>
    </div>
  );
}

type MenuRow = { t: string; off?: boolean; on?: boolean; sep?: boolean };
const MENU: MenuRow[] = [
  { t: 'X 元件', on: true },
  { t: 'X 区域', sep: true },
  { t: '拾取', off: true },
  { t: '下一个', off: true },
  { t: '上一个', off: true, sep: true },
  { t: '间距' },
  { t: '角度' },
  { t: '偏移' },
  { t: '线型' },
  { t: '颜色', off: true, sep: true },
  { t: '新增直线' },
  { t: '删除直线', off: true },
  { t: '下一直线', off: true },
  { t: '前一直线', off: true, sep: true },
  { t: '保存' },
  { t: '检索', on: true },
  { t: '复制', off: true, sep: true },
  { t: '拭除' },
  { t: '显示', off: true },
  { t: '剖面线', on: true },
  { t: '填充', sep: true },
  { t: '完成' },
  { t: '退出' },
];

function RightColumn() {
  return (
    <div className="w-[147px] shrink-0 flex text-[12px] font-['Noto_Sans_CJK_SC','Noto_Sans',sans-serif]">
      <div className="w-[5px] bg-[#f4f4f4]" />
      <div className="w-[3px] bg-[#8f9193]" />
      <div className="w-[139px] flex flex-col">
        <div className="flex h-[572px] shrink-0">
          <div className="w-[130px] border-x-[5px] border-b-[5px] border-[#c3c6c8] bg-white flex flex-col">
            <div className="h-[8px] bg-[#e1e4e6] overflow-hidden pl-[20px] text-[#777] leading-[2px]">移除剖面线</div>
            {MENU.map((m) => (
              <div key={m.t} className="relative">
                <div className={`h-[24px] leading-[24px] pl-[28px] ${m.on ? 'bg-[#58595b] text-white' : m.off ? 'text-[#a6a6a6]' : 'text-[#4a4a4a]'}`}>{m.t}</div>
                {m.sep && <div className={`ml-[24px] mr-[2px] bg-[#e4e6e7] ${m.t === 'X 区域' ? 'h-0' : m.t === '复制' ? 'h-[2px]' : 'h-px'}`} />}
              </div>
            ))}
          </div>
          <div className="w-[9px] bg-[#ececec] overflow-hidden">
            <svg width="9" height="572" viewBox="0 0 9 572" fill="none" className="block">
              <rect x="0" y="0" width="9" height="8" fill="#eee" />
              <rect x="0" y="33" width="9" height="35" fill="#5a5a5a" />
              <rect x="0" y="68" width="9" height="7" fill="#444" />
              <path d="M0 71.5h9" stroke="#bbb" strokeDasharray="1 1" />
              <path d="M0 92l9-11" stroke="#c8902a" strokeWidth="3" />
              <path d="M0 103h6M0 110a3 3 0 106 0" stroke="#1f7ec8" />
              <path d="M2 122v14h7M2 122l7 10" stroke="#1f6fb8" />
              <path d="M0 150h3a3 3 0 016 0M0 154h9" stroke="#222" />
              <path d="M0 168h3v4H0zM5 168h4v4H5zM0 176h3v4H0zM5 176h4v4H5z" stroke="#1f7ec8" />
              <path d="M0 190h8M4 186v10M0 198h8" stroke="#333" />
              <path d="M9 214a7 7 0 00-7 7 7 7 0 007 7" stroke="#555" />
              <rect x="0" y="232" width="9" height="17" fill="#bfe0f0" />
              <path d="M0 252h9v18H0z" fill="#dff0fa" />
              <path d="M0 279l5-6M8 279l1-2M0 290h3M6 290l3-4" stroke="#1f7ec8" />
              <path d="M0 312h5M0 320h9M0 340h9M0 360h9M0 380h9M0 400h9M0 420h9" stroke="#333" />
              <path d="M3 313h3M6 337h3M4 363h3" stroke="#1f7ec8" strokeWidth="2" />
              <text x="0" y="445" fontSize="11" fontFamily="Noto Sans CJK SC" fill="#1f7ec8">径</text>
              <rect x="0" y="448" width="9" height="7" fill="#555" />
              <path d="M0 451.5h9" stroke="#bbb" strokeDasharray="1 1" />
              <path d="M0 467h6v5H0zM0 490h6v5H0zM0 512h6v5H0zM0 535h6v5H0" stroke="#555" fill="#ddd" />
              <path d="M0 480h9M0 503h9M0 525h9M0 547h9" stroke="#999" />
              <rect x="0" y="548" width="9" height="24" fill="#eee" />
            </svg>
          </div>
        </div>
        <div className="flex-1 flex">
          <div className="w-[97px] bg-black">
            <svg width="97" height="128" viewBox="0 0 97 128" fill="none" className="block">
              <rect x="-6" y="1" width="22" height="19" rx="2" fill="#dedede" stroke="#999" />
              <rect x="-6" y="-6" width="30" height="31" rx="3" stroke="#bbb" />
              <path d="M3 33v95" stroke="#ddd" />
              <path d="M-6 28h28a3 3 0 003-3V0" stroke="#777" />
            </svg>
          </div>
          <div className="w-[20px] bg-[#efefef]" />
          <div className="flex-1 bg-[#666]" />
        </div>
      </div>
    </div>
  );
}

function Watermark() {
  return (
    <div className="absolute left-[1308px] top-[633px] w-[206px] h-[62px] bg-[#ffffff]/40 flex pointer-events-none">
      <svg width="58" height="58" viewBox="0 0 58 58" fill="none" className="shrink-0 mt-[3px]">
        <ellipse cx="22" cy="22" rx="11" ry="24" transform="rotate(-30 22 22)" stroke="#2d4f6a" strokeWidth="3.5" opacity=".55" />
        <path d="M26 40c4-14 20-20 26-12 6 9-6 24-18 26" stroke="#a0201e" strokeWidth="3" opacity=".6" />
        <path d="M10 44c8 6 16 4 20-4" stroke="#2d4f6a" strokeWidth="2" opacity=".45" />
      </svg>
      <div className="ml-[12px] mt-[1px] font-['Noto_Sans_CJK_SC']">
        <div className="h-[33px] text-[28px] leading-[33px] font-bold tracking-[1.5px] whitespace-nowrap">
          <span className="text-[#0b5a2a]">野</span>
          <span className="text-[#0b5a2a]">火</span>
          <span className="text-[#1d6b3b]">论</span>
          <span className="text-[#6fa88a]">坛</span>
        </div>
        <div className="-ml-[12px] mt-[2px] text-[16px] leading-[20px] text-[#3f5f5f] font-['Noto_Sans'] whitespace-nowrap">www.proewildfire.cn</div>
      </div>
    </div>
  );
}

export default function App() {
  return (
    <div className="relative w-[1519px] h-[700px] overflow-hidden flex font-['Noto_Sans_CJK_SC','Noto_Sans',sans-serif]">
      <div className="w-[1372px] shrink-0 flex flex-col">
        <Ribbon />
        <div className="flex-1 flex min-h-0">
          <LeftPanel />
          <div className="relative flex-1 bg-[#33312e] overflow-hidden">
            <Drawing />
            <FloatBar />
            <Dialog />
          </div>
        </div>
      </div>
      <RightColumn />
      <Watermark />
    </div>
  );
}
